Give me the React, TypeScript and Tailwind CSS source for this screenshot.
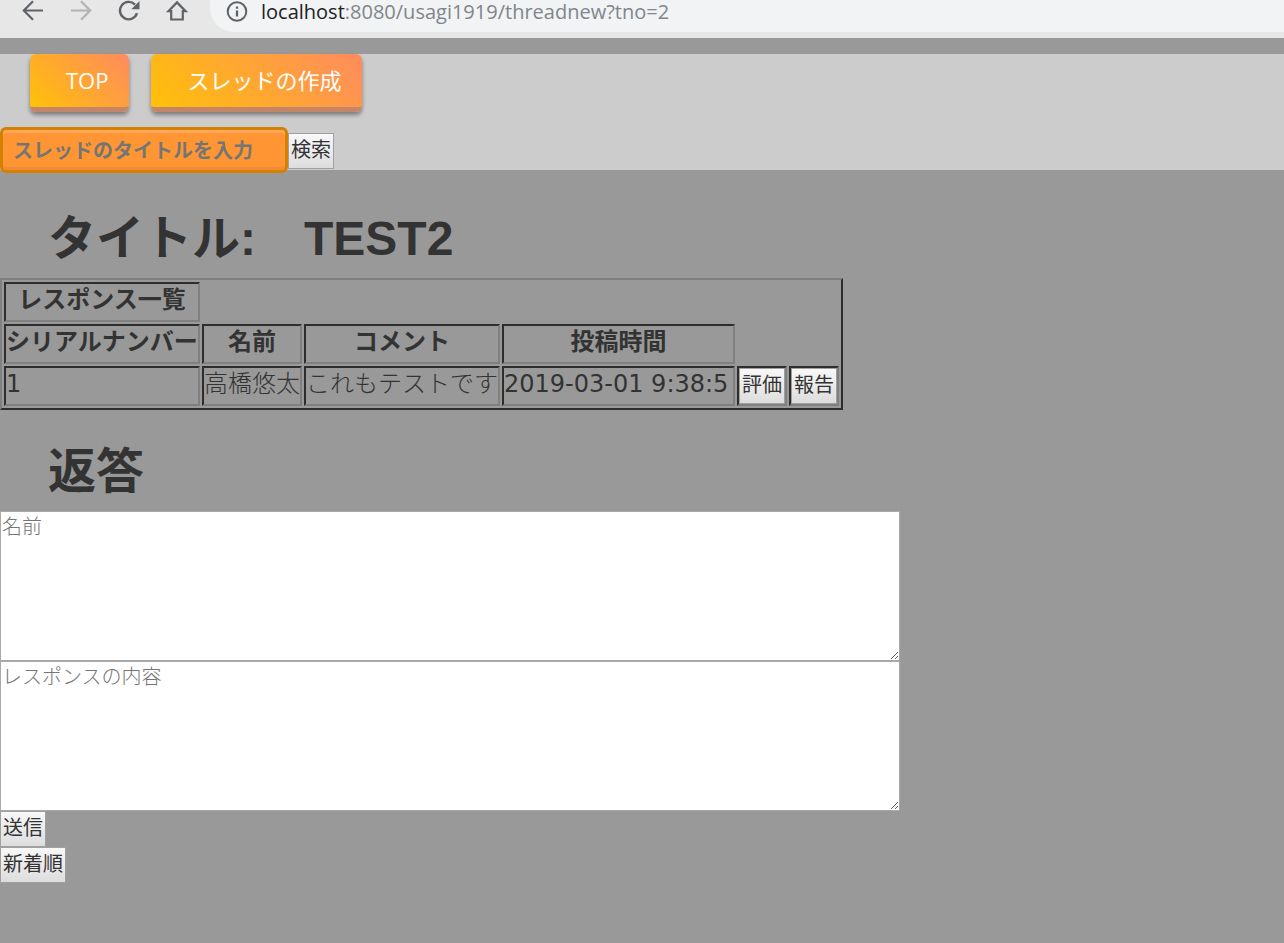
import type { ReactNode } from "react";

const cell =
  "h-10 border-2 border-t-[#2d2d2d] border-l-[#2d2d2d] border-r-[#808080] border-b-[#808080] p-0 pb-1 whitespace-nowrap leading-8";
const actionCell =
  "h-10 border-2 border-t-[#2d2d2d] border-l-[#2d2d2d] border-r-[#808080] border-b-[#808080] p-0";
const greyButton =
  "border border-[#a0a0a0] bg-linear-to-b from-[#f8f8f8] to-[#dddddd] pb-0.5 text-center text-xl leading-8 whitespace-nowrap text-[#333333]";
const heading =
  "pb-0.5 pl-12 font-['Liberation_Sans','Noto_Sans_CJK_JP',sans-serif] text-5xl leading-[74px] font-bold";
const textArea =
  "block h-[150px] w-[900px] max-w-full resize border border-[#a9a9a9] bg-white px-px font-['Noto_Sans_CJK_JP',sans-serif] text-xl leading-7 font-light placeholder:text-[#757575]";

function NavLink({ children }: { children: ReactNode }) {
  return (
    <a
      href="#"
      className="h-[58px] rounded-md border-b-[5px] border-[#c58668] bg-linear-[45deg] from-[#ffc107] to-[#ff8b5f] pr-[21px] pl-9 font-['Open_Sans','Noto_Sans_CJK_JP',sans-serif] text-[22px] leading-[52px] whitespace-nowrap text-white shadow-[0_3px_4px_rgba(0,0,0,0.4)]"
    >
      {children}
    </a>
  );
}

function BrowserBar() {
  return (
    <header className="flex h-[38px] items-start bg-[#e7e7e7]">
      <div className="flex gap-6 pl-[21px]">
        <button type="button" aria-label="Back" className="h-6 w-6">
          <svg viewBox="0 0 24 24" fill="none" stroke="#5f6368" strokeWidth="2.2">
            <path d="M22 10.5H3M12 1.2L2.8 10.5L12 19.8" />
          </svg>
        </button>
        <button type="button" aria-label="Forward" className="h-6 w-6">
          <svg viewBox="0 0 24 24" fill="none" stroke="#b1b3b5" strokeWidth="2.2">
            <path d="M2 10.5h19M12 1.2l9.2 9.3L12 19.8" />
          </svg>
        </button>
        <button type="button" aria-label="Reload" className="h-6 w-6">
          <svg viewBox="0 0 24 24" fill="none" stroke="#5f6368" strokeWidth="2.4">
            <path d="M20 13.2A8.7 8.7 0 1 1 18 4.6" />
            <path d="M22.5 1v8.2h-8.2z" fill="#5f6368" stroke="none" />
          </svg>
        </button>
        <button type="button" aria-label="Home" className="h-6 w-6">
          <svg viewBox="0 0 24 24" fill="none" stroke="#5f6368" strokeWidth="2.2">
            <path d="M3.4 11.2L12 2.4L20.6 11.2H17.8V19.5H6.2V11.2Z" />
          </svg>
        </button>
      </div>
      <div className="ml-[21px] flex h-8 flex-1 items-start rounded-bl-3xl bg-[#f1f3f4] pl-4">
        <svg
          viewBox="0 0 22 22"
          className="mt-px h-[22px] w-[22px]"
          fill="none"
          stroke="#5f6368"
          strokeWidth="2"
        >
          <circle cx="11" cy="10.5" r="9.3" />
          <path d="M11 9.5v6M11 5.5v2.2" strokeWidth="2.3" />
        </svg>
        <p className="ml-[13px] font-['Open_Sans',sans-serif] text-xl leading-6 whitespace-nowrap text-[#80868b]">
          <span className="text-[#202124]">localhost</span>:8080/usagi1919/threadnew?tno=2
        </p>
      </div>
    </header>
  );
}

export default function App() {
  return (
    <div className="min-h-screen bg-[#999999] font-['DejaVu_Sans','Noto_Sans_CJK_JP',sans-serif] text-[#333333]">
      <BrowserBar />
      <nav className="mt-4 bg-[#cccccc]">
        <div className="flex gap-[22px] pl-[30px]">
          <NavLink>TOP</NavLink>
          <NavLink>スレッドの作成</NavLink>
        </div>
        <form className="mt-[15px] flex h-[43px] items-start" onSubmit={(e) => e.preventDefault()}>
          <input
            type="text"
            aria-label="スレッドのタイトルを入力"
            placeholder="スレッドのタイトルを入力"
            className="h-[46px] w-72 rounded-md border-3 border-[#d48000] bg-[#ff9633] px-2.5 pb-0.5 font-['Noto_Sans_CJK_JP',sans-serif] text-xl font-bold shadow-[inset_0_3px_0_#ffa85c,inset_0_-3px_0_#f08c35] placeholder:text-[#757575]"
          />
          <button type="submit" className={`mt-1.5 h-9 w-[46px] ${greyButton}`}>
            検索
          </button>
        </form>
      </nav>
      <main>
        <h1 className={`pt-8 ${heading}`}>タイトル:　TEST2</h1>
        <table className="border-separate border-spacing-[2px] border-2 border-t-[#808080] border-r-[#2d2d2d] border-b-[#2d2d2d] border-l-[#808080] text-2xl">
          <thead>
            <tr>
              <th className={cell}>レスポンス一覧</th>
            </tr>
            <tr>
              <th className={`min-w-[196px] ${cell}`}>シリアルナンバー</th>
              <th className={`min-w-[100px] ${cell}`}>名前</th>
              <th className={`min-w-[196px] ${cell}`}>コメント</th>
              <th className={`min-w-[233px] ${cell}`}>投稿時間</th>
            </tr>
          </thead>
          <tbody>
            <tr>
              <td className={cell}>1</td>
              <td className={`font-light ${cell}`}>高橋悠太</td>
              <td className={`font-light ${cell}`}>これもテストです</td>
              <td className={cell}>2019-03-01 9:38:5</td>
              <td className={actionCell}>
                <button type="button" className={`block h-9 w-[46px] ${greyButton}`}>
                  評価
                </button>
              </td>
              <td className={actionCell}>
                <button type="button" className={`block h-9 w-[46px] ${greyButton}`}>
                  報告
                </button>
              </td>
            </tr>
          </tbody>
        </table>
        <h1 className={`pt-[25px] ${heading}`}>返答</h1>
        <form onSubmit={(e) => e.preventDefault()}>
          <textarea aria-label="名前" placeholder="名前" className={textArea} />
          <textarea
            aria-label="レスポンスの内容"
            placeholder="レスポンスの内容"
            className={textArea}
          />
          <button type="submit" className={`block h-9 w-[46px] ${greyButton}`}>
            送信
          </button>
        </form>
        <button type="button" className={`block h-9 w-[66px] ${greyButton}`}>
          新着順
        </button>
      </main>
    </div>
  );
}
